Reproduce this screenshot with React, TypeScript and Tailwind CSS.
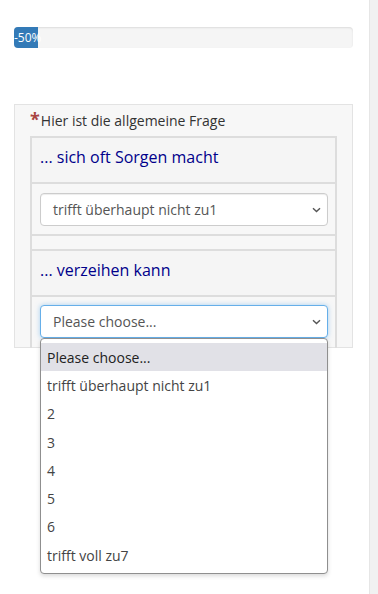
const font = { fontFamily: '"Open Sans", "Noto Sans", sans-serif' };

const options = [
  "Please choose...",
  "trifft überhaupt nicht zu1",
  "2",
  "3",
  "4",
  "5",
  "6",
  "trifft voll zu7",
];

function Chevron() {
  return (
    <svg width="9" height="6" viewBox="0 0 9 6" className="shrink-0">
      <path d="M1 1.2 L4.5 4.6 L8 1.2" fill="none" stroke="#555" strokeWidth="1.4" />
    </svg>
  );
}

function FakeSelect({ value, focused, children }: { value: string; focused?: boolean; children?: React.ReactNode }) {
  return (
    <div className="relative">
      <div
        className={`flex h-[33px] items-center justify-between rounded-[4px] border bg-white pl-[12px] pr-[6px] text-[14px] text-[#555] ${
          focused
            ? "border-[#66afe9] shadow-[0_0_5px_rgba(102,175,233,0.55)]"
            : "border-[#ccc] shadow-[inset_0_1px_1px_rgba(0,0,0,0.075)]"
        }`}
      >
        <span>{value}</span>
        <Chevron />
      </div>
      {children}
    </div>
  );
}

function HeaderRow({ text }: { text: string }) {
  return (
    <div className="flex h-[46px] items-center border-b-2 border-[#ddd] bg-[#f5f5f5] pb-[6px] pl-[8px] text-[16px] text-[#00008b]">
      {text}
    </div>
  );
}

export default function App() {
  return (
    <div className="flex h-[594px] w-[378px] bg-white" style={font}>
      <div className="flex-1 pl-[14px] pr-[16px]">
        {/* progress */}
        <div className="mt-[27px] h-[21px] overflow-visible rounded-[4px] bg-[#f5f5f5] shadow-[inset_0_1px_2px_rgba(0,0,0,0.1)]">
          <div className="h-full w-[24px] whitespace-nowrap rounded-l-[4px] bg-[#337ab7] text-center text-[12px] leading-[21px] text-white">
            -50%
          </div>
        </div>

        {/* question panel */}
        <div className="mt-[56px] h-[244px] border border-[#e3e3e3] bg-[#f7f7f7] px-[15px] pt-[5px]">
          <div className="flex h-[20px] items-center text-[14px] text-[#333]">
            <span className="mr-[1px] self-start text-[18px] font-bold leading-[18px] text-[#a94442]">*</span>
            <span>Hier ist die allgemeine Frage</span>
          </div>

          <div className="mt-[6px] border-x-2 border-t-2 border-[#ddd]">
            <HeaderRow text="... sich oft Sorgen macht" />
            <div className="border-b-2 border-[#ddd] pb-[8px] pl-[8px] pr-[7px] pt-[9px]">
              <FakeSelect value="trifft überhaupt nicht zu1" />
            </div>
            <div className="h-[15px] border-b-2 border-[#ddd]" />
            <HeaderRow text="... verzeihen kann" />
            <div className="h-[51px] pl-[8px] pr-[7px] pt-[8px]">
              <FakeSelect value="Please choose..." focused>
                <div className="absolute left-0 right-0 top-full z-10 rounded-[4px] border border-[#8f8f8f] bg-white py-[4px] shadow-[0_2px_4px_rgba(0,0,0,0.15)]">
                  {options.map((o, i) => (
                    <div
                      key={o}
                      className={`flex h-[28.3px] items-center pl-[6px] text-[14px] ${
                        i === 0 ? "bg-[#e1e1e7] text-[#222]" : "text-[#444]"
                      }`}
                    >
                      {o}
                    </div>
                  ))}
                </div>
              </FakeSelect>
            </div>
          </div>
        </div>
      </div>
      {/* scrollbar */}
      <div className="w-[9px] border-l border-[#e6e6e6] bg-[#f1f1f1]" />
    </div>
  );
}
